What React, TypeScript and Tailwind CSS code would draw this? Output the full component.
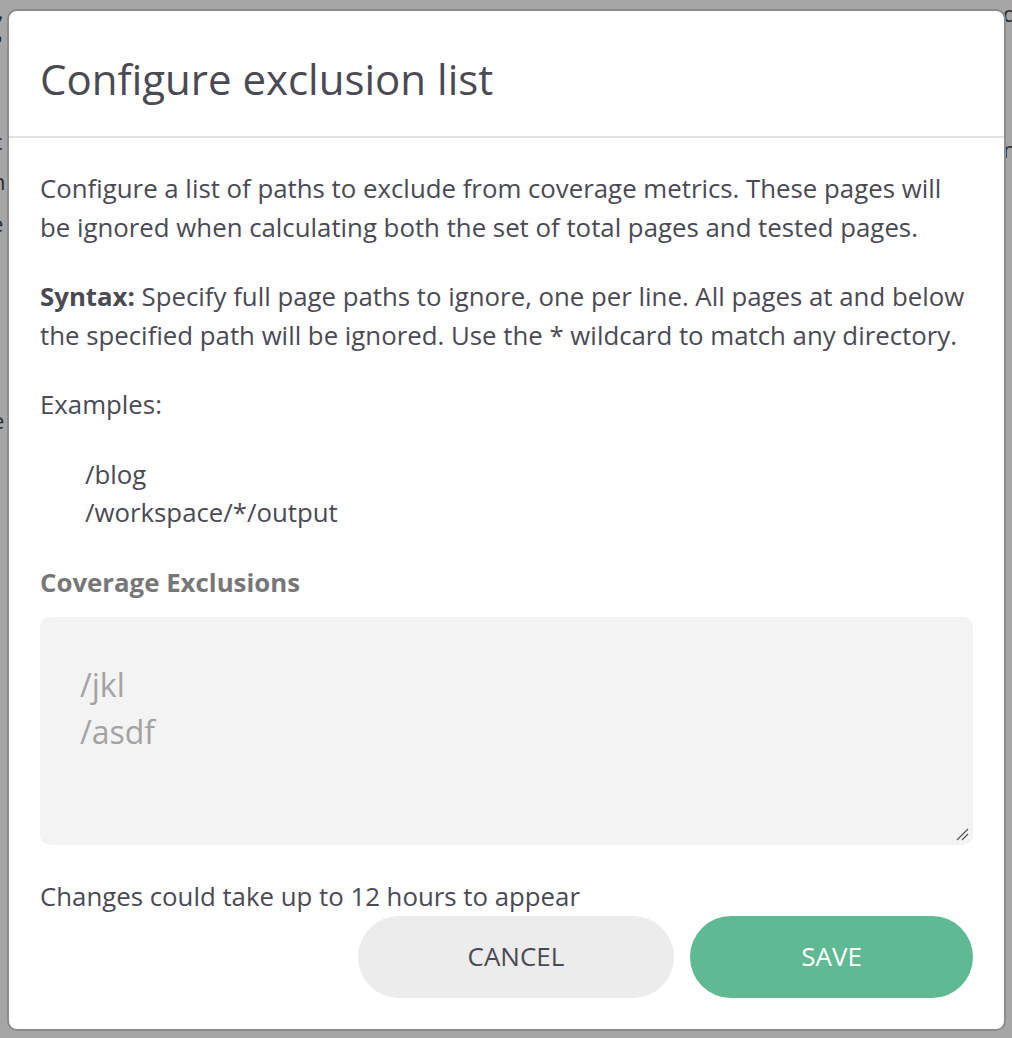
import React from "react";

export default function App() {
  return (
    <div className="relative h-[1038px] w-[1012px] overflow-hidden bg-[#a6a6a6] font-['Open_Sans',sans-serif] text-[#4a4a55]">
      {/* dimmed page fragments behind the modal */}
      <div className="absolute left-[-22px] top-[8px] flex flex-col text-[22px] leading-none text-[#2a2a30]">
        <span className="text-[40px] font-bold">C</span>
        <span className="ml-[14px] mt-[82px]">c</span>
        <span className="ml-[14px] mt-[18px]">n</span>
        <span className="ml-[13px] mt-[20px]">e</span>
        <span className="ml-[14px] mt-[175px]">e</span>
      </div>
      <div className="absolute left-[1003px] top-[2px] flex flex-col text-[22px] leading-none text-[#2a2a30]">
        <span>d</span>
        <span className="mt-[114px]">n</span>
      </div>

      <div className="relative ml-[7px] mt-[9px] flex h-[1022px] w-[999px] flex-col rounded-[10px] border-2 border-[#8c8c8c] bg-white">
        <div className="border-b-2 border-[#dfe2e6] px-[31px] pb-[29px] pt-[39px]">
          <h1 className="text-[42px] leading-[57px] font-normal">Configure exclusion list</h1>
        </div>
        <div className="flex flex-1 flex-col px-[31px] pt-[31px] text-[25.8px] leading-[38.5px]">
          <p>
            Configure a list of paths to exclude from coverage metrics. These pages will be ignored when calculating
            both the set of total pages and tested pages.
          </p>
          <p className="mt-[31px]">
            <span className="font-bold">Syntax:</span> Specify full page paths to ignore, one per line. All pages at
            and below the specified path will be ignored. Use the * wildcard to match any directory.
          </p>
          <p className="mt-[31px]">Examples:</p>
          <div className="mt-[31px] pl-[45px]">
            <div>/blog</div>
            <div>/workspace/*/output</div>
          </div>
          <div className="mt-[31px] font-bold text-[#777777]">Coverage Exclusions</div>
          <div className="relative mt-[16px] h-[228px] w-full rounded-[10px] bg-[#f3f3f3] px-[40px] pt-[44px] text-[32px] leading-[47px] text-[#a3a3a3]">
            <div>/jkl</div>
            <div>/asdf</div>
            <svg className="absolute bottom-[4px] right-[4px]" width="14" height="14" viewBox="0 0 14 14">
              <line x1="2" y1="13" x2="13" y2="2" stroke="#555" strokeWidth="1.2" />
              <line x1="7" y1="13" x2="13" y2="7" stroke="#555" strokeWidth="1.2" />
            </svg>
          </div>
          <p className="mt-[32px]">Changes could take up to 12 hours to appear</p>
          <div className="flex justify-end gap-[16px]">
            <button className="flex h-[82px] items-center rounded-full bg-[#ececec] px-[110px] text-[26px] text-[#4a4a55]">
              CANCEL
            </button>
            <button className="flex h-[82px] items-center rounded-full bg-[#5fba93] px-[111px] text-[26px] text-white">
              SAVE
            </button>
          </div>
        </div>
      </div>
    </div>
  );
}
